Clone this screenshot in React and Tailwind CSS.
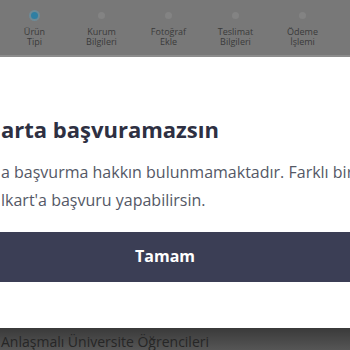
import React from 'react';

const steps = [
  { top: 'Ürün', bottom: 'Tipi', active: true },
  { top: 'Kurum', bottom: 'Bilgileri' },
  { top: 'Fotoğraf', bottom: 'Ekle' },
  { top: 'Teslimat', bottom: 'Bilgileri' },
  { top: 'Ödeme', bottom: 'İşlemi' },
];

const App = () => {
  return (
    <div
      className="w-[350px] h-[350px] overflow-hidden flex flex-col bg-white"
      style={{ fontFamily: '"Open Sans", "Noto Sans", sans-serif' }}
    >
      {/* Stepper under the dim overlay */}
      <div className="h-[57px] shrink-0 bg-[#787878] border-b-2 border-[#8c8c8c] flex pl-[1px] pr-[14px] pt-[12px]">
        {steps.map((step) => (
          <div key={step.top} className="w-[71px] flex flex-col items-center">
            <div
              className={
                step.active
                  ? 'w-[7px] h-[7px] rounded-full bg-[#2f7fa3] ring-2 ring-[#6f8a96]'
                  : 'w-[7px] h-[7px] rounded-full bg-[#838383]'
              }
            />
            <div className="mt-[6px] text-[9px] leading-[13px] text-[#3a3a3a] text-center">
              <div className="-mb-[3px]">{step.top}</div>
              <div>{step.bottom}</div>
            </div>
          </div>
        ))}
      </div>

      {/* Modal */}
      <div className="h-[271px] shrink-0 bg-white flex flex-col">
        <div className="pt-[58px] pl-[1px] whitespace-nowrap text-[22px] leading-[28px] font-bold text-[#2e3042]">
          arta başvuramazsın
        </div>
        <div className="mt-[15px] pl-[1px] whitespace-nowrap text-[16px] leading-[28px] text-[#545866]">
          <div>a başvurma hakkın bulunmamaktadır. Farklı bir</div>
          <div>lkart'a başvuru yapabilirsin.</div>
        </div>
        <button className="mt-[18px] h-[50px] w-full bg-[#3b3e55] text-white text-[16px] leading-[20px] font-bold pr-[20px] pb-[3px]">
          Tamam
        </button>
      </div>

      {/* Page behind overlay */}
      <div className="flex-1 bg-gradient-to-b from-[#3a3a3a] to-[#575757] pl-[1px] pt-[5px] whitespace-nowrap text-[14px] leading-[18px] text-[#262626]">
        Anlaşmalı Üniversite Öğrencileri
      </div>
    </div>
  );
};

export default App;
